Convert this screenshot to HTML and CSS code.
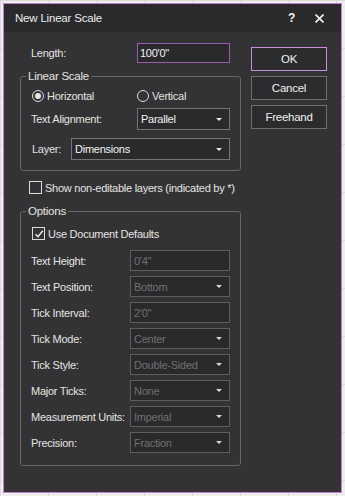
FILE: index.html
```html
<!DOCTYPE html>
<html lang="en">
<head>
    <meta charset="UTF-8">
    <title>New Linear Scale</title>
    <link rel="stylesheet" href="styles.css">
</head>
<body>
<div class="dialog">
    <div class="titlebar">
        <span class="title">New Linear Scale</span>
        <span class="help">?</span>
        <span class="close">
            <svg width="9" height="9" viewBox="0 0 9 9"><path d="M0.5 0.5L8.5 8.5M8.5 0.5L0.5 8.5" stroke="#f0f0f0" stroke-width="1.6"/></svg>
        </span>
    </div>
    <div class="content">
        <div class="main">
            <div class="row length">
                <span class="label">Length:</span>
                <div class="field focus">100'0"</div>
            </div>

            <fieldset class="group scale">
                <legend>Linear Scale</legend>
                <div class="radios">
                    <span class="radio on"><i></i>Horizontal</span>
                    <span class="radio vert"><i></i>Vertical</span>
                </div>
                <div class="row align">
                    <span class="label">Text Alignment:</span>
                    <div class="select">Parallel<b class="arrow"></b></div>
                </div>
                <div class="row layer">
                    <span class="label">Layer:</span>
                    <div class="select wide">Dimensions<b class="arrow"></b></div>
                </div>
            </fieldset>

            <div class="check show"><i></i>Show non-editable layers (indicated by *)</div>

            <fieldset class="group options">
                <legend>Options</legend>
                <div class="check defaults"><i class="ticked">
                    <svg width="10" height="10" viewBox="0 0 10 10"><path d="M1.5 5.2L4 7.8L8.8 1.8" fill="none" stroke="#f0f0f0" stroke-width="1.4"/></svg>
                </i>Use Document Defaults</div>
                <div class="opts">
                    <span class="label">Text Height:</span>
                    <div class="field off">0'4"</div>
                    <span class="label">Text Position:</span>
                    <div class="select off">Bottom<b class="arrow"></b></div>
                    <span class="label">Tick Interval:</span>
                    <div class="field off">2'0"</div>
                    <span class="label">Tick Mode:</span>
                    <div class="select off">Center<b class="arrow"></b></div>
                    <span class="label">Tick Style:</span>
                    <div class="select off">Double-Sided<b class="arrow"></b></div>
                    <span class="label">Major Ticks:</span>
                    <div class="select off">None<b class="arrow"></b></div>
                    <span class="label">Measurement Units:</span>
                    <div class="select off">Imperial<b class="arrow"></b></div>
                    <span class="label">Precision:</span>
                    <div class="select off">Fraction<b class="arrow"></b></div>
                </div>
            </fieldset>
        </div>

        <div class="buttons">
            <div class="btn default">OK</div>
            <div class="btn">Cancel</div>
            <div class="btn">Freehand</div>
        </div>
    </div>
</div>
</body>
</html>
```

FILE: styles.css
```css
html, body{
    margin: 0;
    padding: 0;
}
body{
    width: 345px;
    height: 496px;
    background: #eeeeee;
    background-image: linear-gradient(90deg, #dadada 1px, transparent 1px),
                      linear-gradient(#dadada 1px, transparent 1px);
    background-size: 48px 48px;
    font-family: "Liberation Sans", Arial, sans-serif;
    font-size: 11px;
    letter-spacing: -0.25px;
    color: #e6e4e0;
    overflow: hidden;
}

.dialog{
    margin: 3px 0 0 3px;
    width: 337px;
    height: 488px;
    border: 1px solid #c17fd3;
    background: #333336;
}

/* title bar */
.titlebar{
    height: 28px;
    background: #2a2a2c;
    display: flex;
    align-items: center;
    padding-left: 11px;
}
.title{
    flex: 1;
    font-size: 11.5px;
    letter-spacing: -0.2px;
    color: #ececec;
}
.help{
    font-size: 12px;
    font-weight: bold;
    color: #f0f0f0;
    margin-right: 20px;
}
.close{
    display: flex;
    margin-right: 17px;
}

.content{
    display: flex;
    padding: 11px 0 0 16px;
}
.main{
    width: 221px;
}
.buttons{
    margin-left: 10px;
    padding-top: 4px;
    display: flex;
    flex-direction: column;
    gap: 5px;
}
.btn{
    width: 74px;
    height: 22px;
    line-height: 22px;
    border: 1px solid #6e6e6e;
    background: #2c2c2e;
    text-align: center;
    font-size: 11.5px;
    color: #f0f0f0;
}
.btn.default{
    border-color: #c88fda;
}

/* rows */
.row{
    display: flex;
    align-items: center;
}
.label{
    white-space: nowrap;
}
.length{
    padding-left: 11px;
}
.length .label{
    width: 106px;
}

.field, .select{
    box-sizing: border-box;
    height: 20px;
    border: 1px solid #747474;
    background: #2a2a2c;
    padding-left: 3px;
    display: flex;
    align-items: center;
    color: #f2f2f2;
}
.field.focus{
    width: 93px;
    border-color: #9a5aae;
    padding-left: 2px;
}
.select{
    height: 22px;
    justify-content: space-between;
    padding-right: 7px;
}
.arrow{
    width: 0;
    height: 0;
    border-left: 3px solid transparent;
    border-right: 3px solid transparent;
    border-top: 3px solid #e8e8e8;
}

/* group boxes */
.group{
    margin: 0;
    min-width: 0;
    border: 1px solid #666668;
    border-radius: 3px;
    padding: 0 10px;
}
.group legend{
    padding: 0 2px;
    margin-left: -5px;
    line-height: 14px;
    font-size: 11.5px;
}
.scale{
    margin-top: 6px;
    padding-bottom: 10px;
}
.radios{
    display: flex;
    margin: 6px 0 0 1px;
    height: 14px;
    align-items: center;
}
.radio{
    display: flex;
    align-items: center;
}
.radio i{
    box-sizing: border-box;
    width: 12px;
    height: 12px;
    border: 1px solid #dcdcdc;
    border-radius: 50%;
    margin-right: 3px;
    display: flex;
    align-items: center;
    justify-content: center;
}
.radio.on i::after{
    content: "";
    width: 6px;
    height: 6px;
    border-radius: 50%;
    background: #e4e4e4;
}
.radio.vert{
    margin-left: 43px;
}
.align{
    margin-top: 5px;
}
.align .label{
    width: 106px;
}
.align .select{
    width: 93px;
}
.layer{
    margin-top: 8px;
    padding-left: 1px;
}
.layer .label{
    width: 39px;
}
.layer .select{
    width: 159px;
}

/* checkboxes */
.check{
    display: flex;
    align-items: center;
    height: 13px;
}
.check i{
    box-sizing: border-box;
    width: 13px;
    height: 13px;
    border: 1px solid #dcdcdc;
    margin-right: 3px;
    display: flex;
    align-items: center;
    justify-content: center;
}
.show{
    margin: 10px 0 0 9px;
}
.options{
    margin-top: 10px;
    padding-bottom: 12px;
}
.defaults{
    margin: 9px 0 0 1px;
}

.opts{
    margin-top: 10px;
    display: grid;
    grid-template-columns: 99px 100px;
    row-gap: 5px;
    align-items: center;
}
.opts .field, .opts .select{
    height: 21px;
}
.off{
    border-color: #5e5e5e;
    color: #707070;
}
.off .arrow{
    border-top-color: #d8d8d8;
}
```
